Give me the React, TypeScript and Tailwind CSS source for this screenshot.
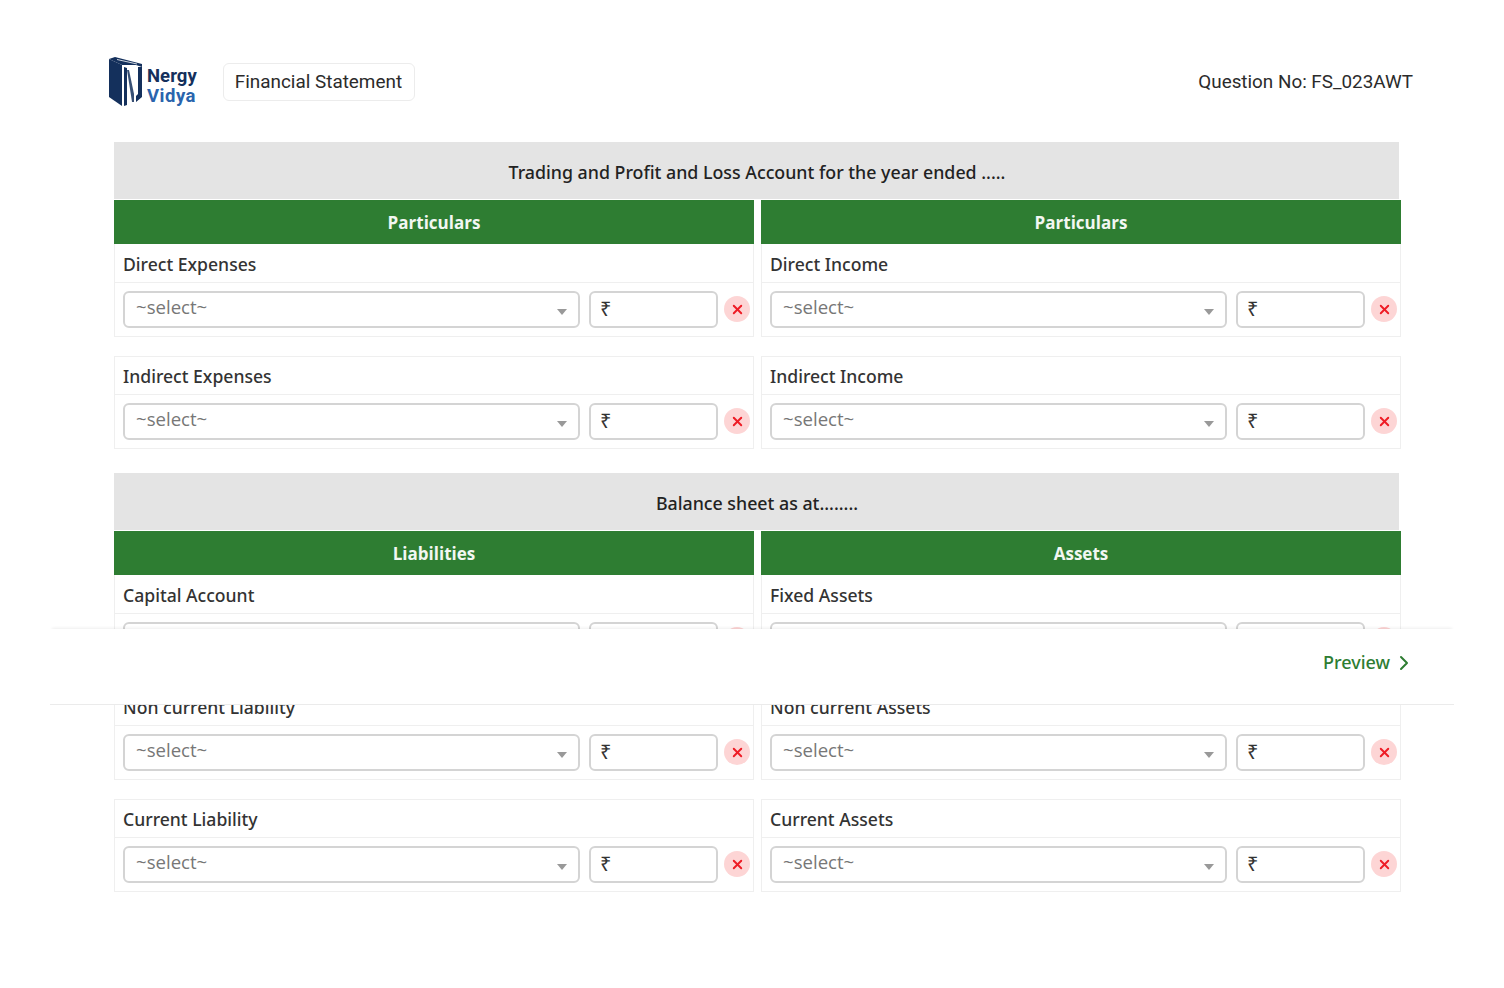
import { ChevronRight, X } from "lucide-react";

const sections = [
  {
    title: "Trading and Profit and Loss Account for the year ended .....",
    heads: ["Particulars", "Particulars"],
    rows: [
      ["Direct Expenses", "Direct Income"],
      ["Indirect Expenses", "Indirect Income"],
    ],
  },
  {
    title: "Balance sheet as at........",
    heads: ["Liabilities", "Assets"],
    rows: [
      ["Capital Account", "Fixed Assets"],
      ["Non current Liability", "Non current Assets"],
      ["Current Liability", "Current Assets"],
    ],
  },
];

function Logo() {
  return (
    <div className="flex items-start">
      <svg width="38" height="50" viewBox="0 0 38 50" className="shrink-0">
        <path d="M1 3 L14 9 L14 50 L1 41 Z" fill="#14305c" />
        <path d="M1 3 L7 1 L34 8 L34 11 L28 9 L14 9 Z" fill="#14305c" />
        <path d="M9 3.5 L29 8" stroke="#fff" strokeWidth="0.8" fill="none" />
        <path d="M16 11 L19 12 L19 49 L16 50 Z" fill="#14305c" />
        <path d="M19 14 L21 14 L26 38 L26 46 L24 46 Z" fill="#14305c" opacity="0.85" />
        <path d="M30 11 L34 11 L34 41 L28 46 L28 40 L30 38 Z" fill="#14305c" />
      </svg>
      <div className="mt-[10px] ml-[1px] flex flex-col font-['Roboto',sans-serif] text-[18.5px] leading-[20px] font-bold">
        <span className="tracking-[0.05px] text-[#14305c]">Nergy</span>
        <span className="tracking-[0.5px] text-[#2a64ad]">Vidya</span>
      </div>
    </div>
  );
}

function Card({ label, first }: { label: string; first?: boolean }) {
  return (
    <div className={`border border-[#efefef] ${first ? "border-t-0" : ""}`}>
      <div
        className={`flex items-center border-b border-[#efefef] pl-2 font-['Noto_Sans',sans-serif] text-[17.6px] font-medium text-[#333] ${
          first ? "h-[39px] pt-[3px]" : "h-[38px] pt-[2px]"
        }`}
      >
        {label}
      </div>
      <div className="flex h-[53px] items-center pb-px pl-2">
        <div className="flex h-[37px] w-[457px] shrink-0 items-center justify-between rounded-md border-2 border-[#d4d4d4] pr-[11px] pl-[11px]">
          <span className="relative -top-[2px] text-[18.6px] text-[#777]">~select~</span>
          <span className="mt-[6px] border-x-[5px] border-t-[6px] border-x-transparent border-t-[#999]" />
        </div>
        <div className="ml-[9px] flex h-[37px] w-[129px] shrink-0 items-center rounded-md border-2 border-[#d4d4d4] pl-[9px] text-[20px] font-medium text-[#333]">
          ₹
        </div>
        <button
          type="button"
          className="ml-[6px] grid h-[26px] w-[26px] shrink-0 place-items-center rounded-full bg-[#fdd5d5] text-[#ee1c25]"
        >
          <X size={15} strokeWidth={3} />
        </button>
      </div>
    </div>
  );
}

export default function App() {
  return (
    <div className="relative h-[988px] w-[1504px] overflow-hidden bg-white font-['Open_Sans',sans-serif]">
      <header className="flex h-[142px] items-start justify-between pt-[56px] pr-[91px] pl-[108px]">
        <div className="flex items-start gap-[26px]">
          <Logo />
          <div className="mt-[7px] flex h-[38px] w-[192px] items-center rounded-md border border-[#ececec] pl-[11px] font-['Roboto',sans-serif] text-[18.9px] text-[#2b2b2b]">
            Financial Statement
          </div>
        </div>
        <div className="pt-[12px] font-['Roboto',sans-serif] text-[18.85px] text-[#2b2b2b]">
          Question No: FS_023AWT
        </div>
      </header>

      <main className="flex flex-col gap-[24px] pl-[114px]">
        {sections.map((section) => (
          <section key={section.title}>
            <div className="flex h-[57px] w-[1285px] items-center justify-center bg-[#e4e4e4] pt-[3px] pl-[1px] font-['Noto_Sans',sans-serif] text-[17.8px] font-medium text-[#222]">
              {section.title}
            </div>
            <div className="mt-px flex w-[1287px] gap-[7px]">
              {section.heads.map((head, col) => (
                <div key={col} className="flex w-[640px] flex-col gap-[19px]">
                  <div>
                    <div className="flex h-[44px] items-center justify-center bg-[#2e7d32] pt-px text-[17px] font-bold text-[#f2f7f2]">
                      {head}
                    </div>
                    <Card label={section.rows[0][col]} first />
                  </div>
                  {section.rows.slice(1).map((row) => (
                    <Card key={row[col]} label={row[col]} />
                  ))}
                </div>
              ))}
            </div>
          </section>
        ))}
      </main>

      {/* sticky footer sits over the form */}
      <div className="absolute top-[629px] left-[50px] flex h-[76px] w-[1404px] items-center justify-end border-b border-[#ebebeb] bg-white pr-[38px] pb-[8px] shadow-[0_-3px_3px_-2px_rgba(0,0,0,0.07)]">
        <span className="flex items-center gap-[2px] font-['Noto_Sans',sans-serif] text-[18px] font-medium text-[#2e7d32]">
          Preview
          <ChevronRight size={24} strokeWidth={2} />
        </span>
      </div>
    </div>
  );
}
